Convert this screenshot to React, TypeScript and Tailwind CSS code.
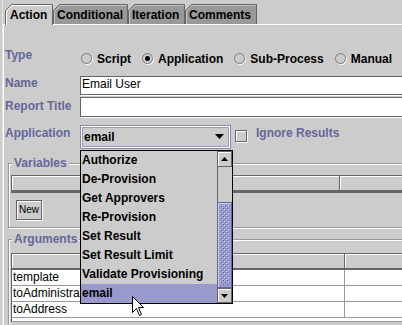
import React from "react";

const LABEL = "text-[#666699] font-bold whitespace-nowrap";

type TabProps = { label: string; w: number; cls: string; selected?: boolean };

function Tab({ label, w, cls, selected }: TabProps) {
  const h = selected ? 21 : 20;
  return (
    <div
      className={`relative shrink-0 ${cls} ${
        selected ? "z-10 h-[21px] pl-[5px]" : "h-[20px] pl-[4px]"
      } pt-[4px] font-bold whitespace-nowrap`}
    >
      <svg width={w} height={h} className="absolute left-0 top-0">
        <path
          d={`M0.5 ${h} V6.5 L6.5 0.5 H${w - 0.5} V${h}`}
          fill={selected ? "#cccccc" : "#999999"}
          stroke="#666666"
        />
        <path
          d={`M1.5 ${h} V7 L7 1.5 H${w - 1.5}`}
          fill="none"
          stroke={selected ? "#ffffff" : "#c4c4c4"}
        />
      </svg>
      <span className="relative">{label}</span>
    </div>
  );
}

function Radio({ label, checked }: { label: string; checked?: boolean }) {
  return (
    <div className="flex items-center gap-[4px]">
      <svg width="12" height="12" viewBox="0 0 12 12" className="shrink-0">
        <circle cx="6.5" cy="6.5" r="5" fill="none" stroke="#ffffff" />
        <circle cx="5.5" cy="5.5" r="5" fill="#cccccc" stroke="#7a7a7a" />
        {checked && <circle cx="5.5" cy="5.5" r="2.5" fill="#000000" />}
      </svg>
      <span className="font-bold whitespace-nowrap">{label}</span>
    </div>
  );
}

function ScrollBtn({ up, cls }: { up?: boolean; cls: string }) {
  return (
    <div
      className={`${cls} flex items-center justify-center bg-[#cccccc] border border-[#666666] shadow-[inset_1px_1px_0_#ffffff]`}
    >
      <svg width="7" height="4" viewBox="0 0 7 4">
        <path d={up ? "M3.5 0 L7 4 H0 Z" : "M0 0 H7 L3.5 4 Z"} fill="#000000" />
      </svg>
    </div>
  );
}

const items = [
  "Authorize",
  "De-Provision",
  "Get Approvers",
  "Re-Provision",
  "Set Result",
  "Set Result Limit",
  "Validate Provisioning",
  "email",
];

const args = ["template", "toAdministrator", "toAddress"];

export default function App() {
  return (
    <div className="relative w-[402px] h-[325px] overflow-hidden bg-[#cccccc] font-['Liberation_Sans',Arial,sans-serif] text-[12px] leading-[14px] text-black">
      <div className="flex flex-col w-[470px] h-full border-l-[2px] border-[#cccccc] shadow-[inset_1px_0_0_#e4e4e4]">
        {/* tabs */}
        <div className="flex items-start h-[24px] pt-[4px] pl-[3px]">
          <Tab label="Action" w={48} cls="w-[48px]" selected />
          <Tab label="Conditional" w={75} cls="w-[75px]" />
          <Tab label="Iteration" w={57} cls="w-[57px]" />
          <Tab label="Comments" w={72} cls="w-[72px]" />
        </div>

        {/* tab content */}
        <div className="flex-1 ml-[1px] border-t border-l border-white pl-[1px] flex flex-col">
          <div className="flex items-start mt-[23px] h-[22px]">
            <div className={`w-[75px] shrink-0 ${LABEL}`}>Type</div>
            <div className="flex items-center gap-[11px] ml-[1px] mt-[4px]">
              <Radio label="Script" />
              <Radio label="Application" checked />
              <Radio label="Sub-Process" />
              <Radio label="Manual" />
            </div>
          </div>

          <div className="flex items-start mt-[6px] h-[19px]">
            <div className={`w-[75px] shrink-0 ${LABEL}`}>Name</div>
            <div className="flex-1 h-[19px] bg-white border border-[#666666] shadow-[1px_1px_0_#ffffff] pl-[1px] whitespace-nowrap">
              Email User
            </div>
          </div>

          <div className="flex items-start mt-[2px] h-[20px]">
            <div className={`w-[75px] shrink-0 pt-[2px] ${LABEL}`}>Report Title</div>
            <div className="flex-1 h-[20px] bg-white border border-[#666666] shadow-[1px_1px_0_#ffffff]" />
          </div>

          <div className="flex items-start mt-[8px] h-[24px]">
            <div className={`w-[75px] shrink-0 pt-[1px] ${LABEL}`}>Application</div>
            <div className="w-[151px] h-[24px] shrink-0 border border-[#8a8aa8] bg-white p-[1px]">
              <div className="h-full flex items-center justify-between border border-[#9999cc] bg-[#cccccc] pl-[1px] pr-[4px]">
                <span className="font-bold">email</span>
                <svg width="9" height="5" viewBox="0 0 9 5" className="mb-[2px]">
                  <path d="M0 0 H9 L4.5 5 Z" fill="#000000" />
                </svg>
              </div>
            </div>
            <div className="w-[12px] h-[12px] shrink-0 ml-[4px] mt-[5px] border border-[#666666] shadow-[1px_1px_0_#ffffff,inset_1px_1px_0_#ffffff]" />
            <div className={`ml-[9px] pt-[1px] ${LABEL}`}>Ignore Results</div>
          </div>

          {/* Variables */}
          <div className="relative mt-[14px] ml-[3px] border border-[#999999] shadow-[inset_1px_1px_0_#ffffff,1px_1px_0_#ffffff] pt-[11px] pl-[2px] pb-[7px]">
            <div className={`absolute left-[3px] top-[-8px] px-[2px] bg-[#cccccc] ${LABEL}`}>
              Variables
            </div>
            <div className="flex h-[18px] border-t border-l border-b-[3px] border-[#666666]">
              <div className="w-[328px] h-[14px] border-r border-[#666666] shadow-[inset_1px_1px_0_#ffffff]" />
              <div className="flex-1 h-[14px] shadow-[inset_1px_1px_0_#ffffff]" />
            </div>
            <div className="mt-[7px] ml-[5px] flex">
              <div className="w-[26px] h-[20px] flex items-center justify-center border border-[#666666] shadow-[inset_1px_1px_0_#ffffff,1px_1px_0_#ffffff] text-[10px] leading-[12px]">
                New
              </div>
            </div>
          </div>

          {/* Arguments */}
          <div className="relative mt-[11px] ml-[3px] h-[120px] border border-[#999999] shadow-[inset_1px_1px_0_#ffffff,1px_1px_0_#ffffff] pt-[13px] pl-[2px]">
            <div className={`absolute left-[3px] top-[-8px] px-[2px] bg-[#cccccc] ${LABEL}`}>
              Arguments
            </div>
            <div className="border-l border-[#666666]">
              <div className="flex h-[17px] border-t border-b-[2px] border-[#666666]">
                <div className="w-[333px] h-[14px] border-r border-[#666666] shadow-[inset_1px_1px_0_#ffffff]" />
                <div className="flex-1 h-[14px] shadow-[inset_1px_1px_0_#ffffff]" />
              </div>
              {args.map((a) => (
                <div key={a} className="flex h-[16px] bg-white border-b border-[#999999]">
                  <div className="w-[333px] border-r border-[#999999] pl-[1px] whitespace-nowrap overflow-hidden">
                    {a}
                  </div>
                  <div className="flex-1" />
                </div>
              ))}
              <div className="h-[4px] bg-white border-b border-[#999999]" />
            </div>
          </div>
        </div>
      </div>

      {/* combo popup */}
      <div className="absolute left-[80px] top-[150px] w-[153px] h-[154px] flex border border-black bg-[#cccccc]">
        <div className="flex-1 flex flex-col">
          {items.map((it) => (
            <div
              key={it}
              className={`h-[19px] leading-[19px] pl-[1px] font-bold whitespace-nowrap ${
                it === "email" ? "bg-[#9999cc]" : ""
              }`}
            >
              {it}
            </div>
          ))}
        </div>
        <div className="w-[15px] flex flex-col">
          <ScrollBtn up cls="h-[16px]" />
          <div className="h-[35px] bg-[#cccccc] border-l border-[#666666]" />
          <div className="relative h-[86px] border border-[#666699] bg-[#9999cc] shadow-[inset_1px_1px_0_#ccccff]">
            <svg className="absolute left-[2px] top-[2px] w-[9px] h-[80px]">
              <defs>
                <pattern id="bumps" width="4" height="4" patternUnits="userSpaceOnUse">
                  <rect x="0" y="0" width="1" height="1" fill="#ccccff" />
                  <rect x="1" y="1" width="1" height="1" fill="#666699" />
                  <rect x="2" y="2" width="1" height="1" fill="#ccccff" />
                  <rect x="3" y="3" width="1" height="1" fill="#666699" />
                </pattern>
              </defs>
              <rect width="100%" height="100%" fill="url(#bumps)" />
            </svg>
          </div>
          <ScrollBtn cls="h-[15px]" />
        </div>
      </div>

      {/* mouse pointer */}
      <svg
        className="absolute left-[132px] top-[296px]"
        width="13"
        height="21"
        viewBox="0 0 13 21"
      >
        <path
          d="M0.5 0.5 L0.5 16.5 L4.5 12.5 L7.5 19.5 L9.5 18.5 L6.5 11.5 L11.5 11.5 Z"
          fill="#ffffff"
          stroke="#000000"
        />
      </svg>
    </div>
  );
}
